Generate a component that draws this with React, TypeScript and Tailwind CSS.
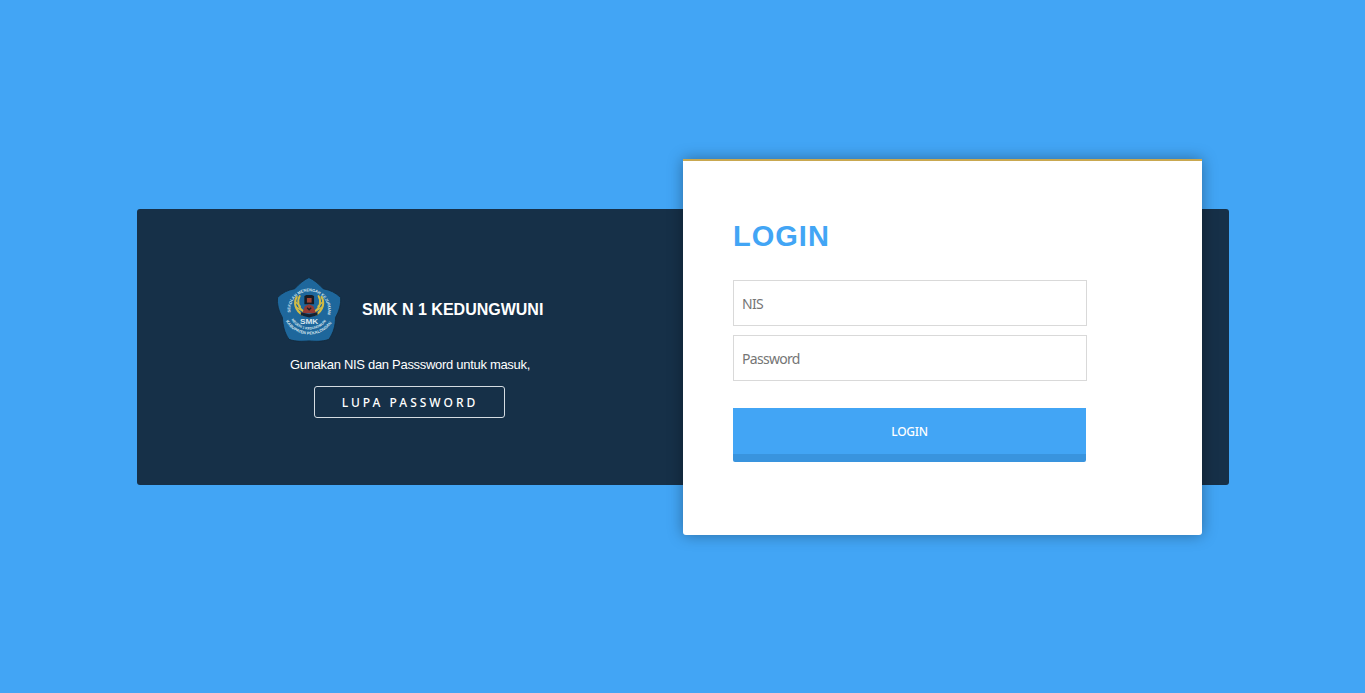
import React from "react";

function Wing() {
  return (
    <g fill="none" stroke="#d3bb45" strokeLinecap="round">
      <path d="M19.500 20c-3 5-2 13 6 17.500" strokeWidth="2" />
      <path d="M22.500 19c-3 5-1.500 12 4 15.500" strokeWidth="1.800" />
      <path d="M18.500 25l4.500 4M19 30l5 3" strokeWidth="1.400" />
    </g>
  );
}

function SchoolLogo() {
  return (
    <svg viewBox="0.2 1.4 62.7 62.7" className="h-16 w-16 shrink-0 overflow-visible" role="img" aria-label="Logo SMK N 1 Kedungwuni">
      <defs>
        <path id="arc-top" d="M13.500 36A18.500 18.500 0 1 1 50 36" />
        <path id="arc-mid" d="M14 42A20.900 20.900 0 0 0 49.500 42" />
        <path id="arc-low" d="M8.500 43.500A27 27 0 0 0 55 43.500" />
      </defs>
      <path
        d="M31.500 1C36 3 41 7 45.500 12C52 13 58 16 62.500 20.500C63 27 61 34 57.500 40C57.500 48 55.500 55 51 61.500C44 64 38 63.500 31.500 63C25 63.500 19 64 12 61.500C7.500 55 6 48 5.500 40C2 34 0 27 .8 20.500C5 16 11 13 17.500 12C22 7 27 3 31.500 1Z"
        fill="#1e679c"
        stroke="#12283b"
        strokeWidth="0.8"
      />
      <g fill="#d8e6ee" fontFamily="Liberation Sans, sans-serif" fontWeight="700">
        <text fontSize="4">
          <textPath href="#arc-top" startOffset="1" textLength="64" lengthAdjust="spacingAndGlyphs">SEKOLAH MENENGAH KEJURUAN</textPath>
        </text>
        <text fontSize="3.500">
          <textPath href="#arc-mid" startOffset="0.500" textLength="40" lengthAdjust="spacingAndGlyphs">NEGERI 1 KEDUNGWUNI</textPath>
        </text>
        <text fontSize="4">
          <textPath href="#arc-low" startOffset="0.500" textLength="53" lengthAdjust="spacingAndGlyphs">KABUPATEN PEKALONGAN</textPath>
        </text>
        <text x="31.700" y="46.800" fontSize="7" textAnchor="middle" textLength="18" lengthAdjust="spacingAndGlyphs">SMK</text>
      </g>
      <Wing />
      <g transform="translate(63.400 0) scale(-1 1)">
        <Wing />
      </g>
      <path d="M27 19l2-1h5.500l2 1v8H27z" fill="#171b23" />
      <path d="M29.500 21h4.600v4.500h-4.600z" fill="#a14535" />
      <path d="M27.500 29l4.200-2 4.200 2 2.500 7H25z" fill="#943b34" />
      <path d="M23.500 35l8.200 2 8.200-2v3l-8.200 2-8.200-2z" fill="#152332" />
      <path d="M29.700 30.500l2 2 2-2" fill="none" stroke="#1b202a" strokeWidth="1.300" />
    </svg>
  );
}

function SchoolInfo() {
  return (
    <section className="flex w-[546px] flex-col items-center pt-[69px] text-white">
      <div className="flex w-[266px] items-center gap-[21px]">
        <SchoolLogo />
        <h2 className="whitespace-nowrap text-[16px] leading-6 font-bold">SMK N 1 KEDUNGWUNI</h2>
      </div>
      <p className="mt-[13px] text-[13px] leading-5 tracking-[-0.3px]">Gunakan NIS dan Passsword untuk masuk,</p>
      <button
        type="button"
        className="mt-[11px] mr-[2px] h-8 w-[191px] rounded-[3px] border border-[#d5dce2] pt-px pl-[2px] font-['Noto_Sans'] text-[12px] font-medium tracking-[3px]"
      >
        LUPA PASSWORD
      </button>
    </section>
  );
}

function LoginCard() {
  const field =
    "block h-[46px] w-[354px] border border-[#d9d9d9] bg-white px-2 font-['Noto_Sans'] text-[14px] tracking-[-0.7px] text-[#555] outline-none placeholder:text-[#757575]";
  return (
    <form
      onSubmit={(event) => event.preventDefault()}
      className="-mt-[50px] h-[376px] w-[519px] shrink-0 rounded-b-[3px] border-t-2 border-[#c9a850] bg-white pt-[57px] pl-[50px] shadow-[0_0_15px_rgba(0,0,0,0.35)]"
    >
      <h1 className="text-[29px] leading-9 font-bold tracking-[1px] text-[#42a5f5]">LOGIN</h1>
      <div className="mt-[26px] flex flex-col gap-[9px]">
        <input className={field} type="text" placeholder="NIS" aria-label="NIS" />
        <input className={field} type="password" placeholder="Password" aria-label="Password" />
      </div>
      <button
        type="submit"
        className="mt-[27px] h-[54px] w-[353px] rounded-b-[2px] border-b-8 border-[#3994de] bg-[#42a5f5] pt-0.5 font-['Noto_Sans'] text-[12px] font-medium tracking-[-0.300px] text-white"
      >
        LOGIN
      </button>
    </form>
  );
}

export default function App() {
  return (
    <main className="flex h-[693px] w-[1365px] justify-center overflow-hidden bg-[#42a5f5] pt-[209px] pl-px font-['Liberation_Sans',sans-serif]">
      <div className="flex h-[276px] w-[1092px] items-start rounded-[3px] bg-[#163048]">
        <SchoolInfo />
        <LoginCard />
      </div>
    </main>
  );
}
